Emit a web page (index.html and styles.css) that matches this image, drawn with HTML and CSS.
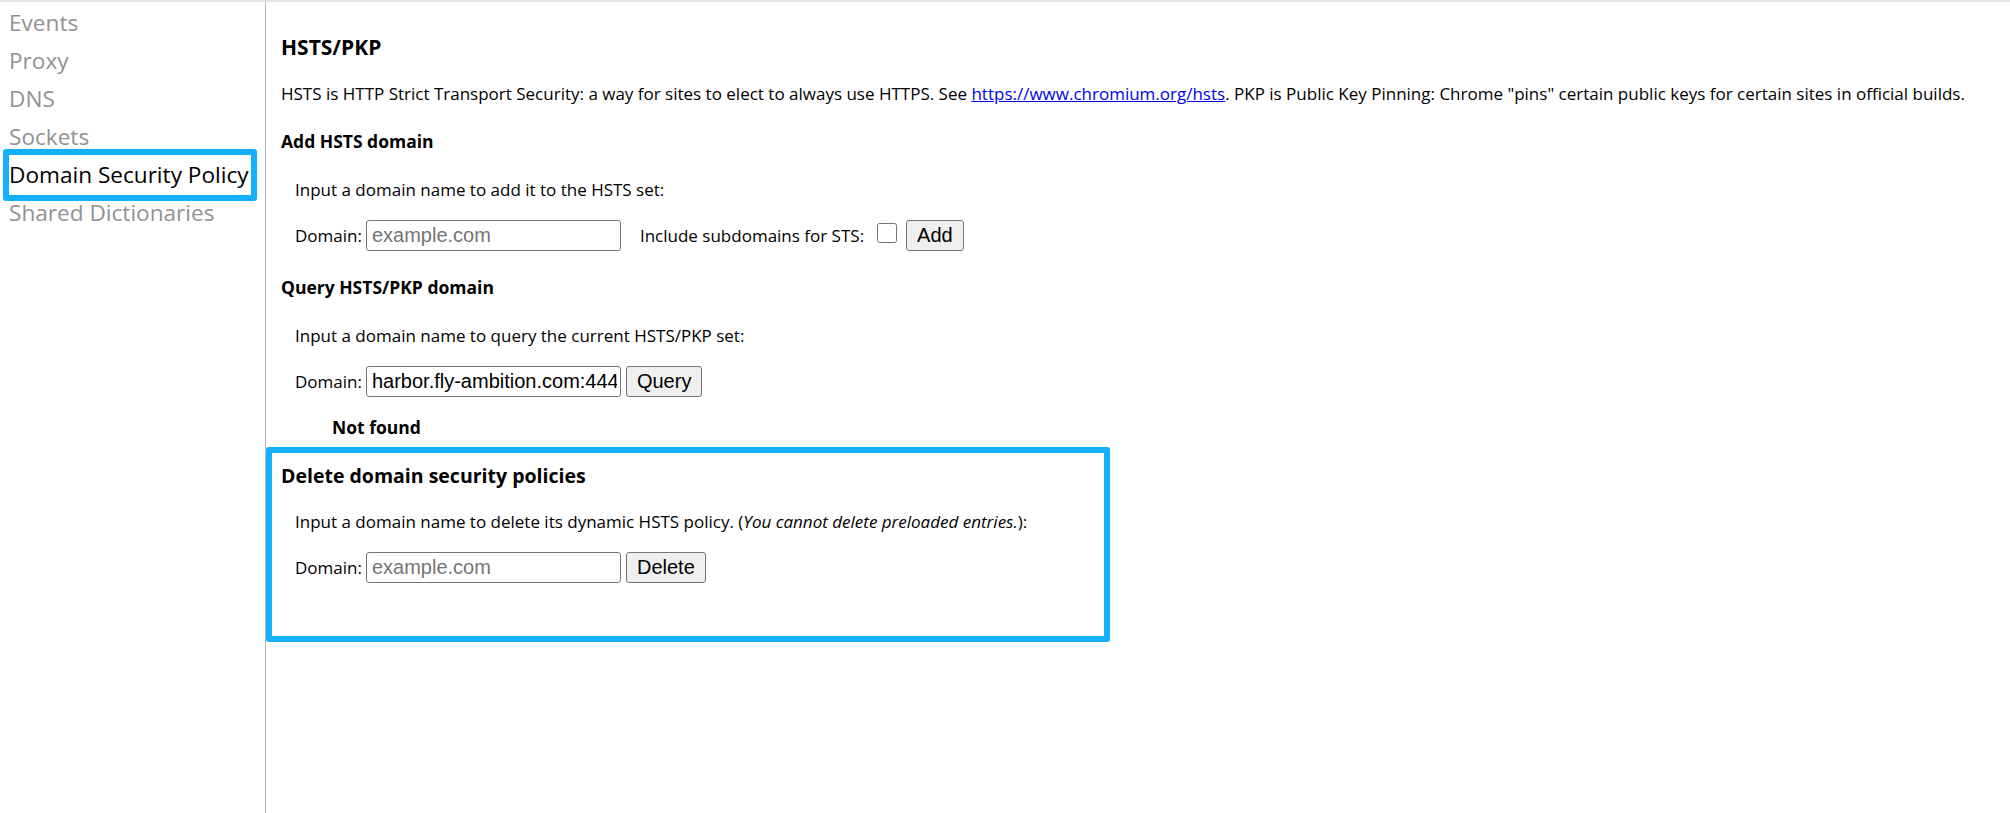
FILE: index.html
```html
<!DOCTYPE html>
<html lang="en">

<head>
    <meta charset="UTF-8">
    <meta name="viewport" content="width=device-width, initial-scale=1.0">
    <title>net-internals</title>
    <link rel="stylesheet" href="styles.css">
</head>

<body>
    <div class="page">
        <nav class="tabs">
            <a class="tab" href="#events">Events</a>
            <a class="tab" href="#proxy">Proxy</a>
            <a class="tab" href="#dns">DNS</a>
            <a class="tab" href="#sockets">Sockets</a>
            <a class="tab selected" href="#hsts">Domain Security Policy</a>
            <a class="tab" href="#sharedDictionary">Shared Dictionaries</a>
        </nav>

        <main class="content">
            <h2>HSTS/PKP</h2>
            <p class="intro">HSTS is HTTP Strict Transport Security: a way for sites to elect to always use HTTPS. See <a href="https://www.chromium.org/hsts">https://www.chromium.org/hsts</a>. PKP is Public Key Pinning: Chrome "pins" certain public keys for certain sites in official builds.</p>

            <h3>Add HSTS domain</h3>
            <form class="indent add-form">
                <p>Input a domain name to add it to the HSTS set:</p>
                <div class="row">
                    <label for="addInput">Domain:</label>
                    <input type="text" id="addInput" class="domain" placeholder="example.com">
                    <label for="addSts" class="sts-label">Include subdomains for STS:</label>
                    <input type="checkbox" id="addSts" class="check">
                    <button type="submit" class="btn">Add</button>
                </div>
            </form>

            <h3>Query HSTS/PKP domain</h3>
            <form class="indent query-form">
                <p>Input a domain name to query the current HSTS/PKP set:</p>
                <div class="row">
                    <label for="queryInput">Domain:</label>
                    <input type="text" id="queryInput" class="domain" value="harbor.fly-ambition.com:444">
                    <button type="submit" class="btn">Query</button>
                </div>
            </form>

            <div class="result">Not found</div>

            <section class="delete-box">
                <h3>Delete domain security policies</h3>
                <form class="indent">
                    <p>Input a domain name to delete its dynamic HSTS policy. (<i>You cannot delete preloaded entries.</i>):</p>
                    <div class="row">
                        <label for="deleteInput">Domain:</label>
                        <input type="text" id="deleteInput" class="domain" placeholder="example.com">
                        <button type="submit" class="btn">Delete</button>
                    </div>
                </form>
            </section>
        </main>
    </div>

    <script>
        document.querySelectorAll('form').forEach(form => {
            form.addEventListener('submit', (e) => {
                e.preventDefault();
            });
        });
    </script>
</body>

</html>
```

FILE: styles.css
```css
* {
    box-sizing: border-box;
    margin: 0;
    padding: 0;
}

body {
    font-family: 'Open Sans', sans-serif;
    font-size: 17px;
    color: #000;
    background: #fff;
}

.page {
    display: flex;
    min-height: 100vh;
    border-top: 2px solid #e2e2e2;
}

/* left tab list */
.tabs {
    width: 266px;
    flex-shrink: 0;
    border-right: 1px solid #b4b4b4;
    padding-top: 2px;
}

.tab {
    display: block;
    position: relative;
    padding-left: 9px;
    font-size: 22.6px;
    line-height: 38px;
    color: #929292;
    text-decoration: none;
    white-space: nowrap;
}

.tab.selected {
    color: #000;
}

.tab.selected::after {
    content: '';
    position: absolute;
    left: 3px;
    right: 8px;
    top: -7px;
    bottom: -7px;
    border: 6px solid #14b0fd;
    border-radius: 3px;
}

/* right content */
.content {
    flex: 1;
    padding: 31px 0 0 15px;
}

h2 {
    font-size: 21px;
    line-height: 28px;
    font-weight: 700;
    margin-bottom: 19px;
}

h3 {
    font-size: 17.5px;
    line-height: 28px;
    font-weight: 700;
    margin-bottom: 21px;
}

p {
    line-height: 28px;
}

.intro {
    margin-bottom: 19px;
    white-space: nowrap;
}

.intro a {
    color: #0000ee;
}

.indent {
    padding-left: 14px;
}

.indent p {
    margin-bottom: 16px;
}

.add-form {
    margin-bottom: 22px;
}

.query-form {
    margin-bottom: 16px;
}

.row {
    display: flex;
    align-items: center;
    height: 31px;
}

.row label {
    margin-right: 4px;
}

.domain {
    width: 255px;
    height: 31px;
    padding: 0 3px 0 5px;
    border: 1px solid #767676;
    border-radius: 3px;
    font-family: 'Liberation Sans', Arial, sans-serif;
    font-size: 20px;
    color: #000;
}

.domain::placeholder {
    color: #757575;
}

.sts-label {
    margin-left: 19px;
}

.check {
    width: 20px;
    height: 20px;
    margin: -6px 9px 0 9px;
}

.btn {
    height: 31px;
    margin-left: 5px;
    padding: 0 10px;
    border: 1px solid #767676;
    border-radius: 3px;
    background-color: #efefef;
    font-family: 'Liberation Sans', Arial, sans-serif;
    font-size: 20px;
    color: #000;
}

.check + .btn {
    margin-left: 0;
}

.result {
    padding-left: 51px;
    font-size: 17.5px;
    line-height: 28px;
    font-weight: 700;
    margin-bottom: 6px;
}

.delete-box {
    width: 844px;
    margin-left: -15px;
    padding: 9px 0 53px 9px;
    border: 6px solid #14b0fd;
    border-radius: 3px;
}

.delete-box h3 {
    font-size: 19.5px;
    margin-bottom: 18px;
}
```
